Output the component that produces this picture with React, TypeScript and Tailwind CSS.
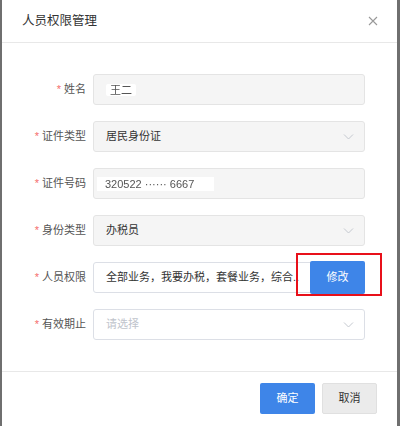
import React from 'react';

const font = { fontFamily: '"Liberation Sans", "Noto Sans CJK SC", sans-serif' };

function Chevron() {
  return (
    <svg width="11" height="7" viewBox="0 0 11 7" className="absolute right-[10px] top-1/2 -translate-y-1/2">
      <path d="M1 1 L5.5 5.5 L10 1" fill="none" stroke="#c4c8cf" strokeWidth="1" />
    </svg>
  );
}

function Label({ text }: { text: string }) {
  return (
    <div className="w-[85px] shrink-0 pr-[1px] text-right text-[11px] text-[#555]">
      <span className="mr-[3px] text-[#f56c6c]">*</span>
      {text}
    </div>
  );
}

function Field({ children, disabled, select }: { children: React.ReactNode; disabled?: boolean; select?: boolean }) {
  return (
    <div
      className={`relative flex h-[31px] w-[272px] items-center rounded-[3px] border px-[12px] text-[11px] text-[#333] ${
        disabled ? 'border-[#e4e4e4] bg-[#f5f5f5]' : 'border-[#dcdfe6] bg-white'
      }`}
    >
      {children}
      {select && <Chevron />}
    </div>
  );
}

export default function App() {
  return (
    <div className="flex h-[426px] w-[400px] bg-[#6f6f6f]" style={font}>
      <div className="ml-[2px] flex h-full w-[395px] flex-col bg-white">
        {/* header */}
        <div className="flex h-[43px] items-center justify-between border-b border-[#e8e8e8] pb-[1px] pl-[20px] pr-[19px]">
          <span className="pt-[2px] text-[12.5px] text-[#333]">人员权限管理</span>
          <svg width="10" height="10" viewBox="0 0 10 10">
            <path d="M1 1 L9 9 M9 1 L1 9" stroke="#999" strokeWidth="1.1" />
          </svg>
        </div>

        {/* form */}
        <div className="flex flex-1 flex-col gap-[16px] pt-[31px]">
          <div className="flex items-center gap-[6px]">
            <Label text="姓名" />
            <Field disabled>
              <span className="rounded-[2px] bg-white px-[4px] text-[11px] leading-[12px] text-[#555] blur-[0.6px]">王二</span>
            </Field>
          </div>
          <div className="flex items-center gap-[6px]">
            <Label text="证件类型" />
            <Field disabled select>居民身份证</Field>
          </div>
          <div className="flex items-center gap-[6px]">
            <Label text="证件号码" />
            <Field disabled>
              <span className="-ml-[9px] w-[117px] overflow-hidden whitespace-nowrap bg-white pl-[8px] text-[11px] leading-[14px] text-[#555] blur-[0.6px]">
                320522 ······ 6667
              </span>
            </Field>
          </div>
          <div className="flex items-center gap-[6px]">
            <Label text="身份类型" />
            <Field disabled select>办税员</Field>
          </div>
          <div className="flex items-center gap-[6px]">
            <Label text="人员权限" />
            <div className="relative flex h-[31px] w-[272px] items-center rounded-[3px] border border-[#dcdfe6] bg-white pl-[12px] text-[11px] text-[#333]">
              <span className="w-[200px] overflow-hidden whitespace-nowrap">全部业务，我要办税，套餐业务，综合..</span>
              <button className="absolute right-[-1px] top-[-2px] h-[33px] w-[55px] rounded-[2px] bg-[#3e85e8] text-[11px] text-white">
                修改
              </button>
              <div className="pointer-events-none absolute left-[202px] top-[-10px] h-[43px] w-[86px] border-2 border-[#e8101a]" />
            </div>
          </div>
          <div className="flex items-center gap-[6px]">
            <Label text="有效期止" />
            <Field select>
              <span className="text-[#c0c4cc]">请选择</span>
            </Field>
          </div>
        </div>

        {/* footer */}
        <div className="flex h-[55px] items-center justify-end gap-[7px] border-t border-[#e8e8e8] pb-[2px] pr-[20px]">
          <button className="h-[31px] w-[55px] rounded-[2px] bg-[#3e85e8] text-[11px] text-white">确定</button>
          <button className="h-[31px] w-[55px] rounded-[2px] border border-[#e0e0e0] bg-[#ebebeb] text-[11px] text-[#333]">
            取消
          </button>
        </div>
      </div>
    </div>
  );
}
